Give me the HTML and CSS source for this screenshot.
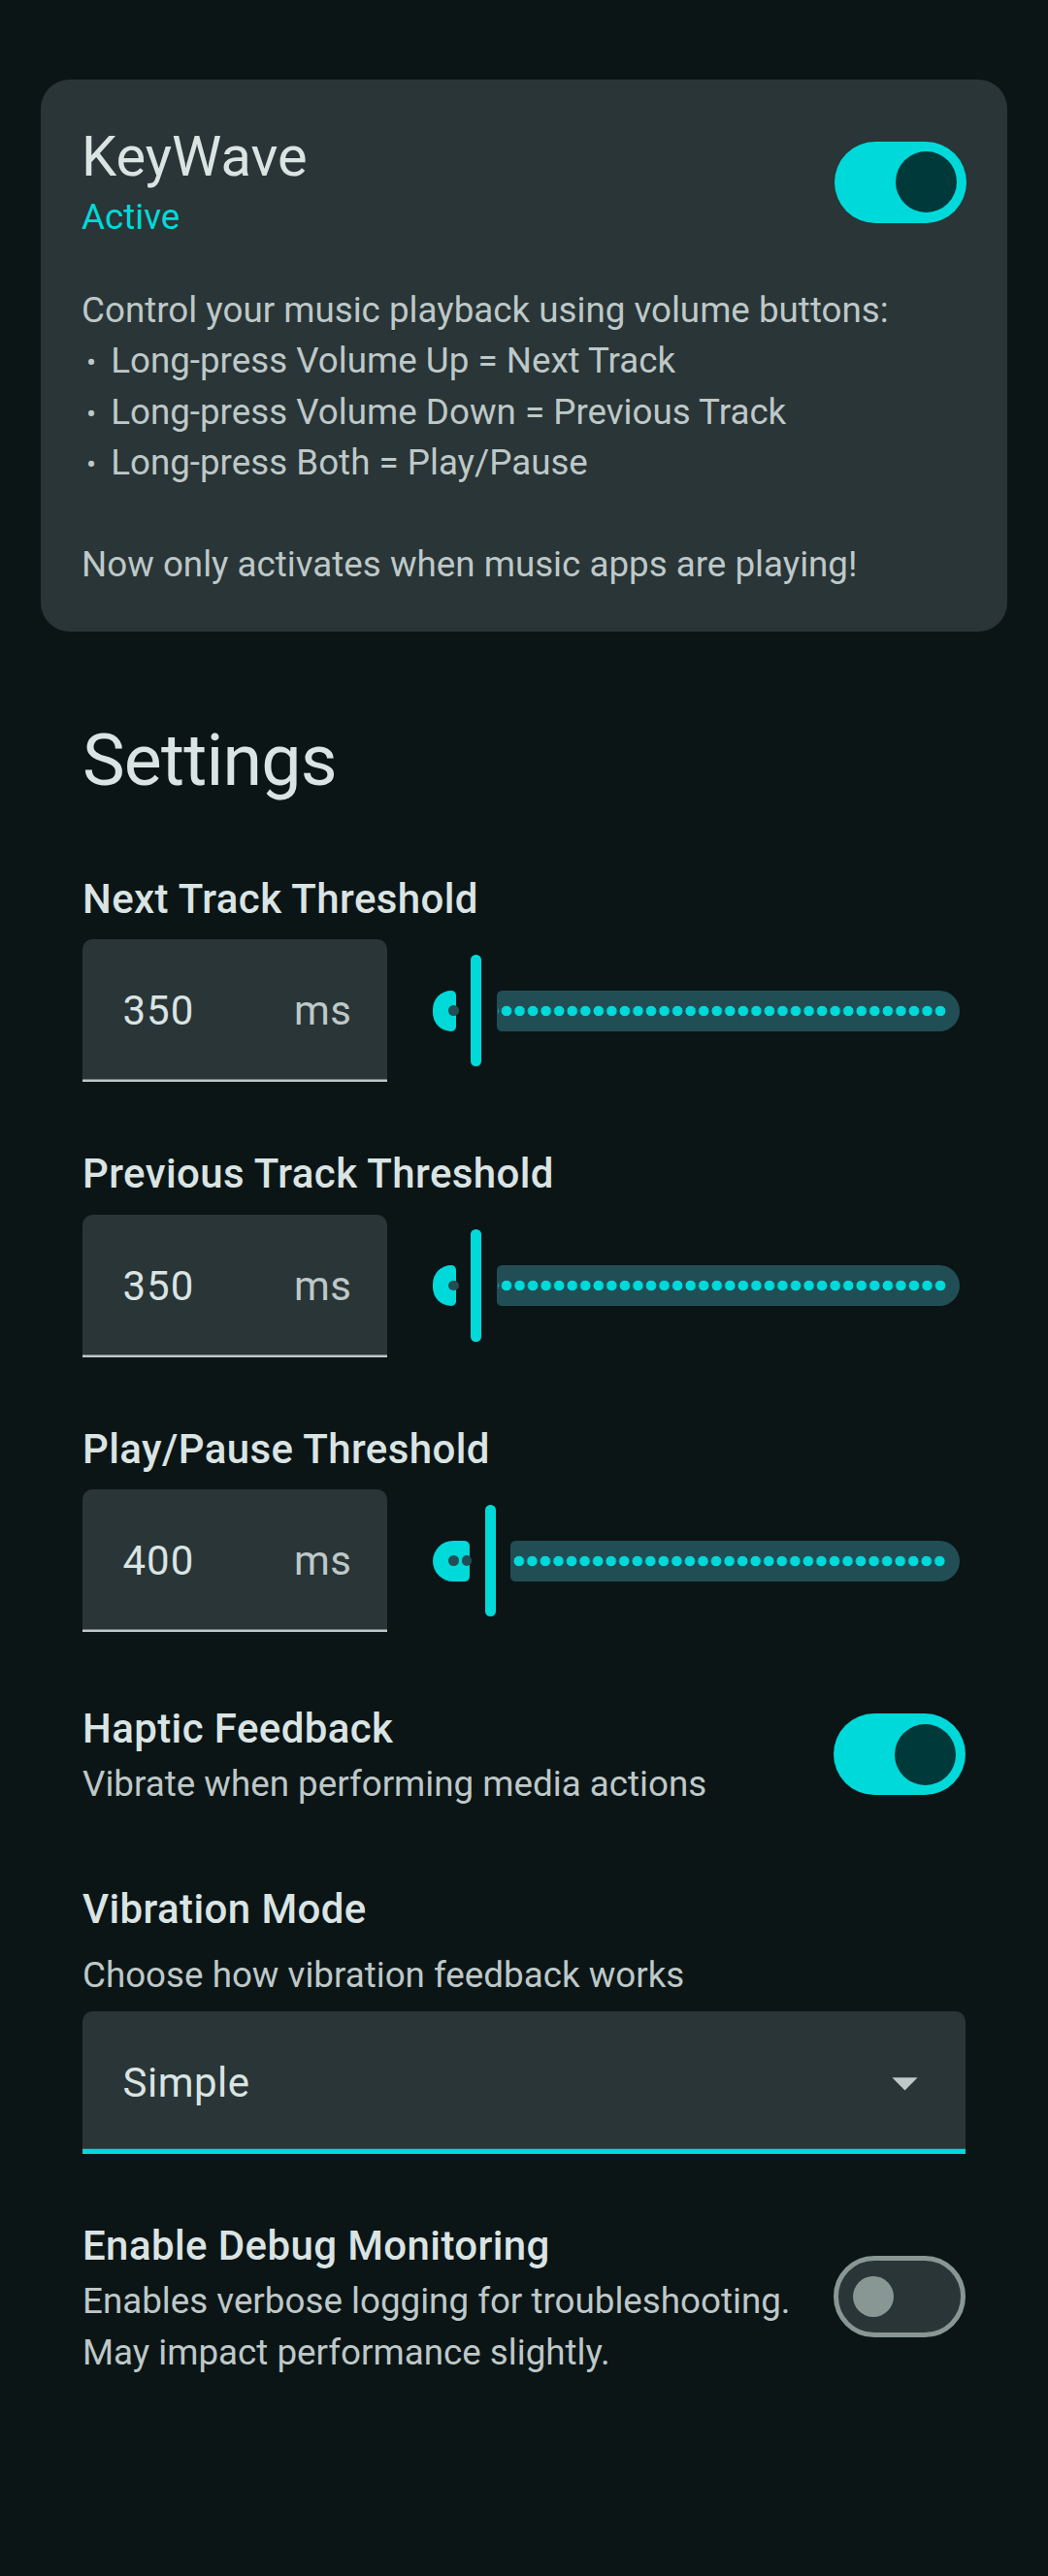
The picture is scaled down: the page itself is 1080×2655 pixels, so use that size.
FILE: index.html
```html
<!DOCTYPE html>
<html lang="en">
<head>
<meta charset="utf-8">
<title>KeyWave</title>
<link rel="stylesheet" href="styles.css">
</head>
<body>
<main class="page">
  <section class="card">
    <div class="card-head">
      <div class="head-text">
        <h1 class="app-title">KeyWave</h1>
        <div class="status">Active</div>
      </div>
      <div class="switch on"><span class="knob"></span></div>
    </div>
    <p class="desc">Control your music playback using volume buttons:<br><span class="bul">•</span>Long-press Volume Up = Next Track<br><span class="bul">•</span>Long-press Volume Down = Previous Track<br><span class="bul">•</span>Long-press Both = Play/Pause<br><br>Now only activates when music apps are playing!</p>
  </section>

  <section class="settings">
    <h2 class="settings-title">Settings</h2>

    <div class="group">
      <div class="label">Next Track Threshold</div>
      <div class="field-row">
        <div class="num-field"><span class="num-value">350</span><span class="num-suffix">ms</span></div>
        <div class="slider">
          <div class="track-active" style="width:23.3px"><span class="stop"></span></div>
          <div class="handle"></div>
          <div class="track-inactive"></div>
        </div>
      </div>
    </div>

    <div class="group">
      <div class="label">Previous Track Threshold</div>
      <div class="field-row">
        <div class="num-field"><span class="num-value">350</span><span class="num-suffix">ms</span></div>
        <div class="slider">
          <div class="track-active" style="width:23.3px"><span class="stop"></span></div>
          <div class="handle"></div>
          <div class="track-inactive"></div>
        </div>
      </div>
    </div>

    <div class="group">
      <div class="label">Play/Pause Threshold</div>
      <div class="field-row">
        <div class="num-field"><span class="num-value">400</span><span class="num-suffix">ms</span></div>
        <div class="slider">
          <div class="track-active" style="width:38px"><span class="stop"></span><span class="stop"></span></div>
          <div class="handle"></div>
          <div class="track-inactive"></div>
        </div>
      </div>
    </div>

    <div class="toggle-row haptic">
      <div class="toggle-text">
        <div class="label">Haptic Feedback</div>
        <div class="sub">Vibrate when performing media actions</div>
      </div>
      <div class="switch on"><span class="knob"></span></div>
    </div>

    <div class="group vib">
      <div class="label">Vibration Mode</div>
      <div class="sub sub-gap">Choose how vibration feedback works</div>
      <div class="dropdown">
        <span class="dd-value">Simple</span>
        <svg class="dd-icon" viewBox="0 0 24 24" width="63" height="63"><path d="M7 10l5 5 5-5z" fill="#bec8c8"/></svg>
      </div>
    </div>

    <div class="toggle-row debug">
      <div class="toggle-text">
        <div class="label">Enable Debug Monitoring</div>
        <div class="sub">Enables verbose logging for troubleshooting.<br>May impact performance slightly.</div>
      </div>
      <div class="switch off"><span class="knob"></span></div>
    </div>
  </section>
</main>
</body>
</html>
```

FILE: styles.css
```css
html, body {
  margin: 0;
  padding: 0;
  background: #0b1516;
}
body {
  font-family: Roboto, "Noto Sans", sans-serif;
  color: #dae4e3;
  min-height: 2655px;
}
.page {
  padding-top: 81.5px;
  padding-bottom: 120px;
}

/* Card */
.card {
  margin: 0 42px;
  padding: 43px 42px 42px;
  background: #293536;
  border-radius: 30px;
}
.card-head {
  display: flex;
  align-items: center;
  justify-content: space-between;
}
.app-title {
  margin: 0;
  font-size: 57.75px;
  line-height: 73.5px;
  font-weight: 400;
  color: #dae4e3;
}
.status {
  font-size: 36.75px;
  line-height: 52.5px;
  color: #00d9da;
}
.desc {
  margin: 43px 0 0;
  font-size: 36.75px;
  line-height: 52.5px;
  color: #bec8c8;
}
.bul {
  font-size: 30px;
  line-height: 0;
  margin: 0 15px 0 5px;
}

/* Switch */
.switch {
  flex: none;
  width: 136.5px;
  height: 84px;
  border-radius: 42px;
  box-sizing: border-box;
  display: flex;
  align-items: center;
}
.switch.on {
  background: #00d9da;
  justify-content: flex-end;
  padding-right: 10.5px;
}
.switch.on .knob {
  width: 63px;
  height: 63px;
  border-radius: 50%;
  background: #00393a;
}
.switch.off {
  background: #293536;
  border: 5.25px solid #889694;
  padding-left: 15.5px;
}
.switch.off .knob {
  width: 42px;
  height: 42px;
  border-radius: 50%;
  background: #889694;
}

/* Settings */
.settings {
  padding: 0 85px;
  margin-top: 86.5px;
}
.settings-title {
  margin: 0;
  font-size: 73.5px;
  line-height: 94.5px;
  font-weight: 400;
  letter-spacing: -0.8px;
  color: #dae4e3;
}
.group {
  margin-top: 63px;
}
.label {
  font-size: 42px;
  line-height: 63px;
  font-weight: 500;
  letter-spacing: 0.39px;
  color: #dae4e3;
}
.sub {
  font-size: 36.75px;
  line-height: 52.5px;
  color: #bec8c8;
}
.sub-gap {
  margin-top: 10.5px;
}

/* Number field + slider */
.field-row {
  margin-top: 10.5px;
  display: flex;
  align-items: center;
  height: 147px;
}
.num-field {
  flex: none;
  width: 314px;
  height: 147px;
  box-sizing: border-box;
  padding: 0 36.5px 0 41.5px;
  display: flex;
  align-items: center;
  justify-content: space-between;
  background: #293536;
  border-radius: 10.5px 10.5px 0 0;
  box-shadow: inset 0 -2.625px 0 #bec8c8;
  font-size: 42px;
  letter-spacing: 1px;
}
.num-value {
  color: #dae4e3;
}
.num-suffix {
  color: #bec8c8;
  letter-spacing: 0.5px;
}
.slider {
  flex: 1;
  display: flex;
  align-items: center;
  height: 115.5px;
  margin-left: 47.4px;
  margin-right: 5.7px;
}
.track-active {
  flex: none;
  height: 42px;
  box-sizing: border-box;
  border-radius: 21px 5.25px 5.25px 21px;
  background: #00d9da;
  display: flex;
  align-items: center;
  gap: 3.06px;
  padding-left: 15.85px;
}
.stop {
  flex: none;
  width: 10.5px;
  height: 10.5px;
  border-radius: 50%;
  background: #214e54;
}
.handle {
  flex: none;
  width: 10.5px;
  height: 115.5px;
  border-radius: 5.25px;
  margin: 0 15.75px;
  background: #00d9da;
}
.track-inactive {
  flex: 1;
  height: 42px;
  box-sizing: border-box;
  padding: 0 13.8px 0 1px;
  border-radius: 5.25px 21px 21px 5.25px;
  background-image:
    radial-gradient(circle, #00d9da 5px, rgba(0, 217, 218, 0) 5.6px),
    linear-gradient(#214e54, #214e54);
  background-size: 13.56px 42px, 100% 100%;
  background-repeat: repeat-x, no-repeat;
  background-position: right center, 0 0;
  background-origin: content-box, border-box;
  background-clip: content-box, border-box;
}

/* Toggle rows */
.toggle-row {
  display: flex;
  align-items: center;
  justify-content: space-between;
  min-height: 126px;
}
.toggle-row.haptic {
  margin-top: 63px;
}
.toggle-row.debug {
  margin-top: 63.5px;
}
.toggle-text {
  flex: 1;
  min-width: 0;
}
.group.vib {
  margin-top: 65px;
}

/* Dropdown */
.dropdown {
  margin-top: 10.5px;
  height: 147px;
  box-sizing: border-box;
  padding: 0 31px 0 41.5px;
  display: flex;
  align-items: center;
  justify-content: space-between;
  background: #293536;
  border-radius: 10.5px 10.5px 0 0;
  box-shadow: inset 0 -5.25px 0 #00d9da;
}
.dd-value {
  font-size: 42px;
  letter-spacing: 0.5px;
  color: #dae4e3;
}
.dd-icon {
  display: block;
  flex: none;
}
```
